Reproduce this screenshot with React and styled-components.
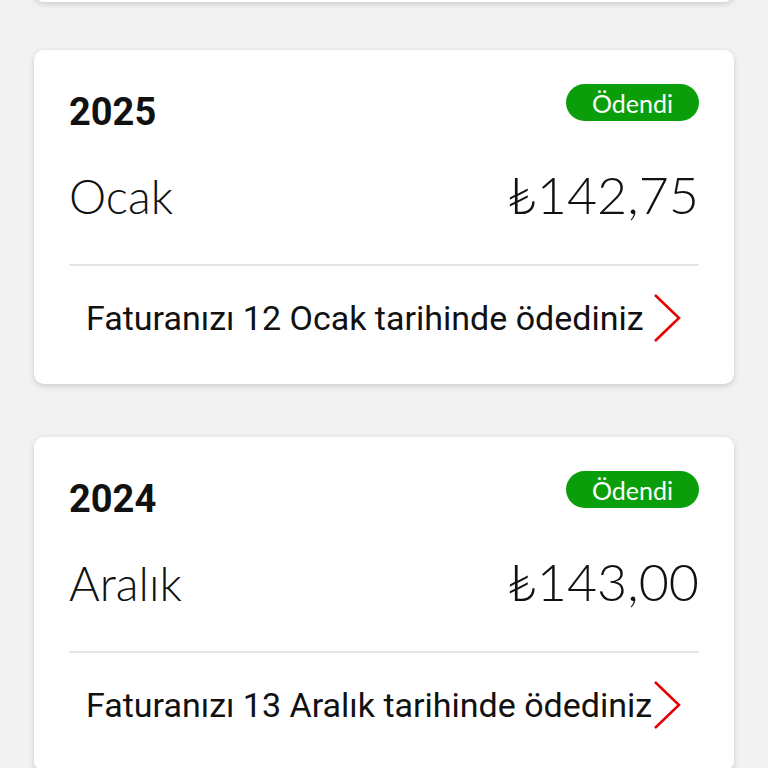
import React from "react";
import styled, { createGlobalStyle } from "styled-components";

const Global = createGlobalStyle`
  html, body { margin: 0; padding: 0; background: #f2f2f2; }
  body { font-family: Roboto, "Liberation Sans", sans-serif; overflow: hidden; }
`;

const Page = styled.div`
  display: flex;
  flex-direction: column;
  gap: 53px;
  padding: 0 34px;
  background: #f2f2f2;
  min-height: 768px;
`;

const Card = styled.section`
  background: #fff;
  border-radius: 10px;
  box-shadow: 0 2px 6px rgba(0, 0, 0, 0.16);
  padding: 34px 35px 0;
  display: flex;
  flex-direction: column;
`;

const PeekCard = styled(Card)`
  margin-top: -98px;
  margin-bottom: -5px;
  height: 100px;
  padding: 0;
`;

const Header = styled.div`
  display: flex;
  justify-content: space-between;
  align-items: flex-start;
  height: 56px;
`;

const Year = styled.div`
  font-family: Roboto, sans-serif;
  font-weight: 700;
  font-size: 38px;
  line-height: 1;
  color: #111;
  margin-top: 9px;
`;

const Badge = styled.span`
  background: #0a9f0a;
  color: #fff;
  border-radius: 19px;
  height: 37px;
  padding: 0 26px;
  display: inline-flex;
  align-items: center;
  font-family: Lato, "Open Sans", sans-serif;
  font-size: 25px;
  font-weight: 400;
`;

const AmountRow = styled.div`
  display: flex;
  justify-content: space-between;
  align-items: baseline;
  height: 126px;
  padding-top: 23px;
  box-sizing: border-box;
  border-bottom: 2px solid #e6e6e6;
`;

const Month = styled.div`
  font-family: Lato, "Open Sans", sans-serif;
  font-weight: 300;
  font-size: 47px;
  color: #111;
`;

const Amount = styled.div`
  font-family: Lato, "Open Sans", sans-serif;
  font-weight: 300;
  font-size: 52px;
  color: #111;
`;

const Footer = styled.div`
  display: flex;
  justify-content: space-between;
  align-items: center;
  height: 104px;
  padding: 0 18px 14px 17px;
`;

const FooterText = styled.span`
  font-family: Roboto, sans-serif;
  font-size: 34px;
  color: #111;
`;

const Chevron = () => (
  <svg width="28" height="50" viewBox="0 0 28 50" fill="none">
    <path d="M2 2 L26 25 L2 48" stroke="#e60000" strokeWidth="2.5" />
  </svg>
);

const bills = [
  { year: "2025", month: "Ocak", amount: "₺142,75", text: "Faturanızı 12 Ocak tarihinde ödediniz" },
  { year: "2024", month: "Aralık", amount: "₺143,00", text: "Faturanızı 13 Aralık tarihinde ödediniz" },
];

export default function App() {
  return (
    <>
      <Global />
      <Page>
        <PeekCard />
        {bills.map((b) => (
          <Card key={b.year}>
            <Header>
              <Year>{b.year}</Year>
              <Badge>Ödendi</Badge>
            </Header>
            <AmountRow>
              <Month>{b.month}</Month>
              <Amount>{b.amount}</Amount>
            </AmountRow>
            <Footer>
              <FooterText>{b.text}</FooterText>
              <Chevron />
            </Footer>
          </Card>
        ))}
      </Page>
    </>
  );
}
